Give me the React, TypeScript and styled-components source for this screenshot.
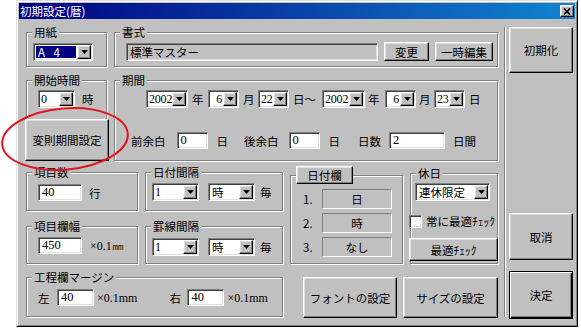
import React from "react";
import styled, { createGlobalStyle, css } from "styled-components";

const GlobalStyle = createGlobalStyle`
  html, body { margin: 0; padding: 0; background: #fff; }
  body {
    font-family: "Noto Sans CJK JP", "Noto Sans", sans-serif;
    font-size: 11.5px;
    color: #000;
  }
  * { box-sizing: border-box; }
`;

const raised = css`
  background: #c0c0c0;
  border: 1px solid;
  border-color: #fff #000 #000 #fff;
  box-shadow: inset -1px -1px 0 #808080, inset 1px 1px 0 #dfdfdf;
`;

const sunken = css`
  border: 1px solid;
  border-color: #808080 #fff #fff #808080;
  box-shadow: inset 1px 1px 0 #404040, inset -1px -1px 0 #dfdfdf;
`;

const Page = styled.div`
  position: relative;
  width: 581px;
  height: 328px;
  overflow: hidden;
`;

const Window = styled.div`
  margin-left: 16px;
  width: 562px;
  height: 327px;
  background: #c0c0c0;
  border: 1px solid;
  border-color: #dfdfdf #000 #000 #dfdfdf;
  box-shadow: inset 1px 1px 0 #fff, inset -1px -1px 0 #808080;
  padding: 2px;
  display: flex;
  flex-direction: column;
`;

const TitleBar = styled.div`
  height: 16px;
  flex-shrink: 0;
  display: flex;
  align-items: center;
  justify-content: space-between;
  padding: 0 1px 0 1px;
  background: linear-gradient(90deg, #000080, #1084d0);
`;

const TitleText = styled.span`
  color: #fff;
  font-size: 11.5px;
  line-height: 16px;
`;

const CloseButton = styled.span`
  ${raised}
  width: 14px;
  height: 12px;
  display: flex;
  align-items: center;
  justify-content: center;
`;

const Body = styled.div`
  flex: 1;
  display: flex;
  padding-left: 7px;
`;

const LeftPane = styled.div`
  width: 473px;
  flex-shrink: 0;
  display: flex;
  flex-direction: column;
`;

const Row = styled.div<{ $mt?: number }>`
  display: flex;
  align-items: flex-start;
  margin-top: ${(p) => p.$mt ?? 0}px;
`;

const Column = styled.div<{ $w: number; $mt?: number; $ml?: number }>`
  width: ${(p) => p.$w}px;
  flex-shrink: 0;
  display: flex;
  flex-direction: column;
  margin-top: ${(p) => p.$mt ?? 0}px;
  margin-left: ${(p) => p.$ml ?? 0}px;
`;

const Group = styled.div<{
  $w: number;
  $h: number;
  $pt?: number;
  $pl?: number;
  $ml?: number;
  $mt?: number;
  $open?: boolean;
}>`
  position: relative;
  flex-shrink: 0;
  width: ${(p) => p.$w}px;
  height: ${(p) => p.$h}px;
  margin-left: ${(p) => p.$ml ?? 0}px;
  margin-top: ${(p) => p.$mt ?? 0}px;
  border: 1px solid #808080;
  box-shadow: inset 1px 1px 0 #fff, 1px 1px 0 #fff;
  padding: ${(p) => p.$pt ?? 10}px 0 0 ${(p) => p.$pl ?? 6}px;
  display: flex;
  flex-direction: column;
  align-items: flex-start;
  ${(p) =>
    p.$open &&
    css`
      border-bottom: none;
      box-shadow: inset 1px 1px 0 #fff, 1px 0 0 #fff;
    `}
`;

const Legend = styled.span`
  position: absolute;
  top: -7px;
  left: 5px;
  padding: 0 2px;
  background: #c0c0c0;
  line-height: 13px;
  white-space: nowrap;
`;

const HeaderButton = styled.span`
  ${raised}
  position: absolute;
  top: -10px;
  left: 5px;
  width: 57px;
  height: 18px;
  display: flex;
  align-items: center;
  justify-content: center;
`;

const Line = styled.div<{ $mt?: number; $ml?: number }>`
  display: flex;
  align-items: center;
  margin-top: ${(p) => p.$mt ?? 0}px;
  margin-left: ${(p) => p.$ml ?? 0}px;
`;

const Text = styled.span<{ $ml?: number; $serif?: boolean; $w?: number }>`
  flex-shrink: 0;
  white-space: nowrap;
  line-height: 14px;
  margin-left: ${(p) => p.$ml ?? 0}px;
  ${(p) => p.$w !== undefined && css`width: ${p.$w}px;`}
  ${(p) =>
    p.$serif &&
    css`
      font-family: "Liberation Serif", serif;
      font-size: 12px;
    `}
`;

const Combo = styled.div<{ $w: number; $ml?: number }>`
  ${sunken}
  flex-shrink: 0;
  display: flex;
  width: ${(p) => p.$w}px;
  height: 18px;
  margin-left: ${(p) => p.$ml ?? 0}px;
  background: #fff;
  padding: 1px;
`;

const ComboValue = styled.span<{ $right?: boolean; $sel?: boolean; $num?: boolean }>`
  flex: 1;
  min-width: 0;
  display: flex;
  align-items: center;
  justify-content: ${(p) => (p.$right ? "flex-end" : "flex-start")};
  padding: ${(p) => (p.$num ? "0 1px 0 1px" : "0 2px")};
  white-space: nowrap;
  font-family: ${(p) => (p.$num ? '"Liberation Serif", serif' : "inherit")};
  font-size: ${(p) => (p.$num ? 12 : 11.5)}px;
  letter-spacing: ${(p) => (p.$num ? "-0.2px" : "normal")};
  ${(p) =>
    p.$sel &&
    css`
      background: #000080;
      color: #fff;
      margin: 1px;
      letter-spacing: 3px;
    `}
`;

const DropButton = styled.span`
  ${raised}
  position: relative;
  width: 14px;
  flex-shrink: 0;
  display: flex;
  align-items: center;
  justify-content: center;
`;

const Field = styled.div<{ $w: number; $h?: number; $ml?: number; $gray?: boolean; $jp?: boolean }>`
  ${sunken}
  flex-shrink: 0;
  width: ${(p) => p.$w}px;
  height: ${(p) => p.$h ?? 17}px;
  margin-left: ${(p) => p.$ml ?? 0}px;
  background: ${(p) => (p.$gray ? "#c0c0c0" : "#fff")};
  display: flex;
  align-items: center;
  padding: 0 3px;
  white-space: nowrap;
  font-family: ${(p) => (p.$jp ? "inherit" : '"Liberation Serif", serif')};
  font-size: ${(p) => (p.$jp ? 11.5 : 12.5)}px;
`;

const SlotField = styled.div`
  width: 70px;
  height: 20px;
  border: 1px solid;
  border-color: #808080 #fff #fff #808080;
  display: flex;
  align-items: center;
  justify-content: center;
`;

const Checkbox = styled.span`
  ${sunken}
  width: 13px;
  height: 13px;
  flex-shrink: 0;
  background: #fff;
`;

const Button = styled.div<{ $w: number; $h: number; $ml?: number; $mt?: number; $default?: boolean }>`
  ${raised}
  flex-shrink: 0;
  width: ${(p) => p.$w}px;
  height: ${(p) => p.$h}px;
  margin-left: ${(p) => p.$ml ?? 0}px;
  margin-top: ${(p) => p.$mt ?? 0}px;
  display: flex;
  align-items: center;
  justify-content: center;
  white-space: nowrap;
  ${(p) =>
    p.$default &&
    css`
      border: 1px solid #000;
      box-shadow: inset 1px 1px 0 #fff, inset -1px -1px 0 #000, inset -2px -2px 0 #808080;
    `}
`;

const Separator = styled.div`
  width: 2px;
  height: 290px;
  margin: 8px 0 0 5px;
  border-left: 1px solid #808080;
  border-right: 1px solid #fff;
  flex-shrink: 0;
`;

const RightPane = styled.div`
  width: 64px;
  margin-left: 3px;
  display: flex;
  flex-direction: column;
`;

const Annotation = styled.svg`
  position: absolute;
  left: 0;
  top: 0;
  pointer-events: none;
`;

const Arrow = () => (
  <svg width="7" height="4" viewBox="0 0 7 4">
    <path d="M0 0h7L3.5 4z" fill="#000" />
  </svg>
);

type SelectProps = { w: number; ml?: number; value: string; num?: boolean; right?: boolean; sel?: boolean };

const Select = ({ w, ml, value, num, right, sel }: SelectProps) => (
  <Combo $w={w} $ml={ml}>
    <ComboValue $num={num} $right={right} $sel={sel}>
      {value}
    </ComboValue>
    <DropButton>
      <Arrow />
    </DropButton>
  </Combo>
);

export default function App() {
  return (
    <>
      <GlobalStyle />
      <Page>
        <Window>
          <TitleBar>
            <TitleText>初期設定(暦)</TitleText>
            <CloseButton>
              <svg width="8" height="7" viewBox="0 0 8 7">
                <path d="M1 0.5L7 6.5M7 0.5L1 6.5" stroke="#000" strokeWidth="1.7" />
              </svg>
            </CloseButton>
          </TitleBar>
          <Body>
            <LeftPane>
              <Row $mt={13}>
                <Group $w={81} $h={35} $pt={10} $pl={6}>
                  <Legend>用紙</Legend>
                  <Select w={60} value="A 4" sel />
                </Group>
                <Group $w={384} $h={35} $pt={9} $pl={11} $ml={7}>
                  <Legend>書式</Legend>
                  <Line>
                    <Field $w={252} $h={18} $gray $jp>
                      標準マスター
                    </Field>
                    <Button $w={45} $h={19} $ml={6}>
                      変更
                    </Button>
                    <Button $w={58} $h={19} $ml={6}>
                      一時編集
                    </Button>
                  </Line>
                </Group>
              </Row>

              <Row $mt={13}>
                <Column $w={81}>
                  <Group $w={81} $h={39} $pt={9} $pl={11} $open>
                    <Legend>開始時間</Legend>
                    <Line>
                      <Select w={37} value="0" num />
                      <Text $ml={7}>時</Text>
                    </Line>
                  </Group>
                  <Button $w={84} $h={42} $ml={-1}>
                    変則期間設定
                  </Button>
                </Column>
                <Group $w={384} $h={81} $pt={9} $pl={31} $ml={7}>
                  <Legend>期間</Legend>
                  <Line>
                    <Select w={42} value="2002" num />
                    <Text $ml={4}>年</Text>
                    <Select w={31} ml={4.5} value="6" num right />
                    <Text $ml={4}>月</Text>
                    <Select w={31} ml={3.5} value="22" num />
                    <Text $ml={4}>日～</Text>
                    <Select w={43} ml={6} value="2002" num />
                    <Text $ml={3}>年</Text>
                    <Select w={31} ml={5.5} value="6" num right />
                    <Text $ml={3}>月</Text>
                    <Select w={31} ml={3.5} value="23" num />
                    <Text $ml={4}>日</Text>
                  </Line>
                  <Line $mt={24} $ml={-15}>
                    <Text>前余白</Text>
                    <Field $w={31} $ml={11}>
                      0
                    </Field>
                    <Text $ml={9}>日</Text>
                    <Text $ml={16}>後余白</Text>
                    <Field $w={31} $ml={10}>
                      0
                    </Field>
                    <Text $ml={9}>日</Text>
                    <Text $ml={18}>日数</Text>
                    <Field $w={56} $ml={8}>
                      2
                    </Field>
                    <Text $ml={8}>日間</Text>
                  </Line>
                </Group>
              </Row>

              <Row $mt={11}>
                <Column $w={257}>
                  <Row>
                    <Group $w={112} $h={39} $pt={11} $pl={11}>
                      <Legend>項目数</Legend>
                      <Line>
                        <Field $w={44}>40</Field>
                        <Text $ml={7}>行</Text>
                      </Line>
                    </Group>
                    <Group $w={138} $h={39} $pt={10} $pl={6} $ml={7}>
                      <Legend>日付間隔</Legend>
                      <Line>
                        <Select w={47} value="1" num />
                        <Select w={47} ml={9} value="時" />
                        <Text $ml={5}>毎</Text>
                      </Line>
                    </Group>
                  </Row>
                  <Row $mt={15}>
                    <Group $w={112} $h={38} $pt={10} $pl={11}>
                      <Legend>項目欄幅</Legend>
                      <Line>
                        <Field $w={44}>450</Field>
                        <Text $ml={8} $serif>
                          ×0.1㎜
                        </Text>
                      </Line>
                    </Group>
                    <Group $w={138} $h={38} $pt={11} $pl={6} $ml={7}>
                      <Legend>罫線間隔</Legend>
                      <Line>
                        <Select w={47} value="1" num />
                        <Select w={47} ml={9} value="時" />
                        <Text $ml={5}>毎</Text>
                      </Line>
                    </Group>
                  </Row>
                </Column>

                <Group $w={113} $h={89} $pt={13} $pl={12} $ml={7} $mt={3}>
                  <HeaderButton>日付欄</HeaderButton>
                  <Line>
                    <Text $w={19}>1.</Text>
                    <SlotField>日</SlotField>
                  </Line>
                  <Line $mt={4}>
                    <Text $w={19}>2.</Text>
                    <SlotField>時</SlotField>
                  </Line>
                  <Line $mt={4}>
                    <Text $w={19}>3.</Text>
                    <SlotField>なし</SlotField>
                  </Line>
                </Group>

                <Group $w={88} $h={91} $pt={9} $pl={4} $ml={7} $mt={1}>
                  <Legend>休日</Legend>
                  <Select w={75} value="連休限定" />
                  <Line $mt={13} $ml={-6}>
                    <Checkbox />
                    <Text $ml={4}>常に最適ﾁｪｯｸ</Text>
                  </Line>
                  <Button $w={89} $h={23} $ml={-6} $mt={10}>
                    最適ﾁｪｯｸ
                  </Button>
                </Group>
              </Row>

              <Row $mt={13}>
                <Group $w={257} $h={40} $pt={11} $pl={11}>
                  <Legend>工程欄マージン</Legend>
                  <Line>
                    <Text>左</Text>
                    <Field $w={37} $ml={7.5}>
                      40
                    </Field>
                    <Text $ml={3} $serif>
                      ×0.1mm
                    </Text>
                    <Text $ml={32}>右</Text>
                    <Field $w={37} $ml={6.5}>
                      40
                    </Field>
                    <Text $ml={3} $serif>
                      ×0.1mm
                    </Text>
                  </Line>
                </Group>
                <Button $w={94} $h={41} $ml={20}>
                  フォントの設定
                </Button>
                <Button $w={95} $h={41} $ml={6}>
                  サイズの設定
                </Button>
              </Row>
            </LeftPane>

            <Separator />

            <RightPane>
              <Button $w={64} $h={46} $mt={8}>
                初期化
              </Button>
              <Button $w={64} $h={47} $mt={140}>
                取消
              </Button>
              <Button $w={64} $h={48} $mt={11} $default>
                決定
              </Button>
            </RightPane>
          </Body>
        </Window>

        <Annotation width="581" height="328" viewBox="0 0 581 328">
          <ellipse
            cx="65"
            cy="139"
            rx="63"
            ry="30.5"
            fill="none"
            stroke="#e3141e"
            strokeWidth="2"
            transform="rotate(-5 65 139)"
          />
        </Annotation>
      </Page>
    </>
  );
}
